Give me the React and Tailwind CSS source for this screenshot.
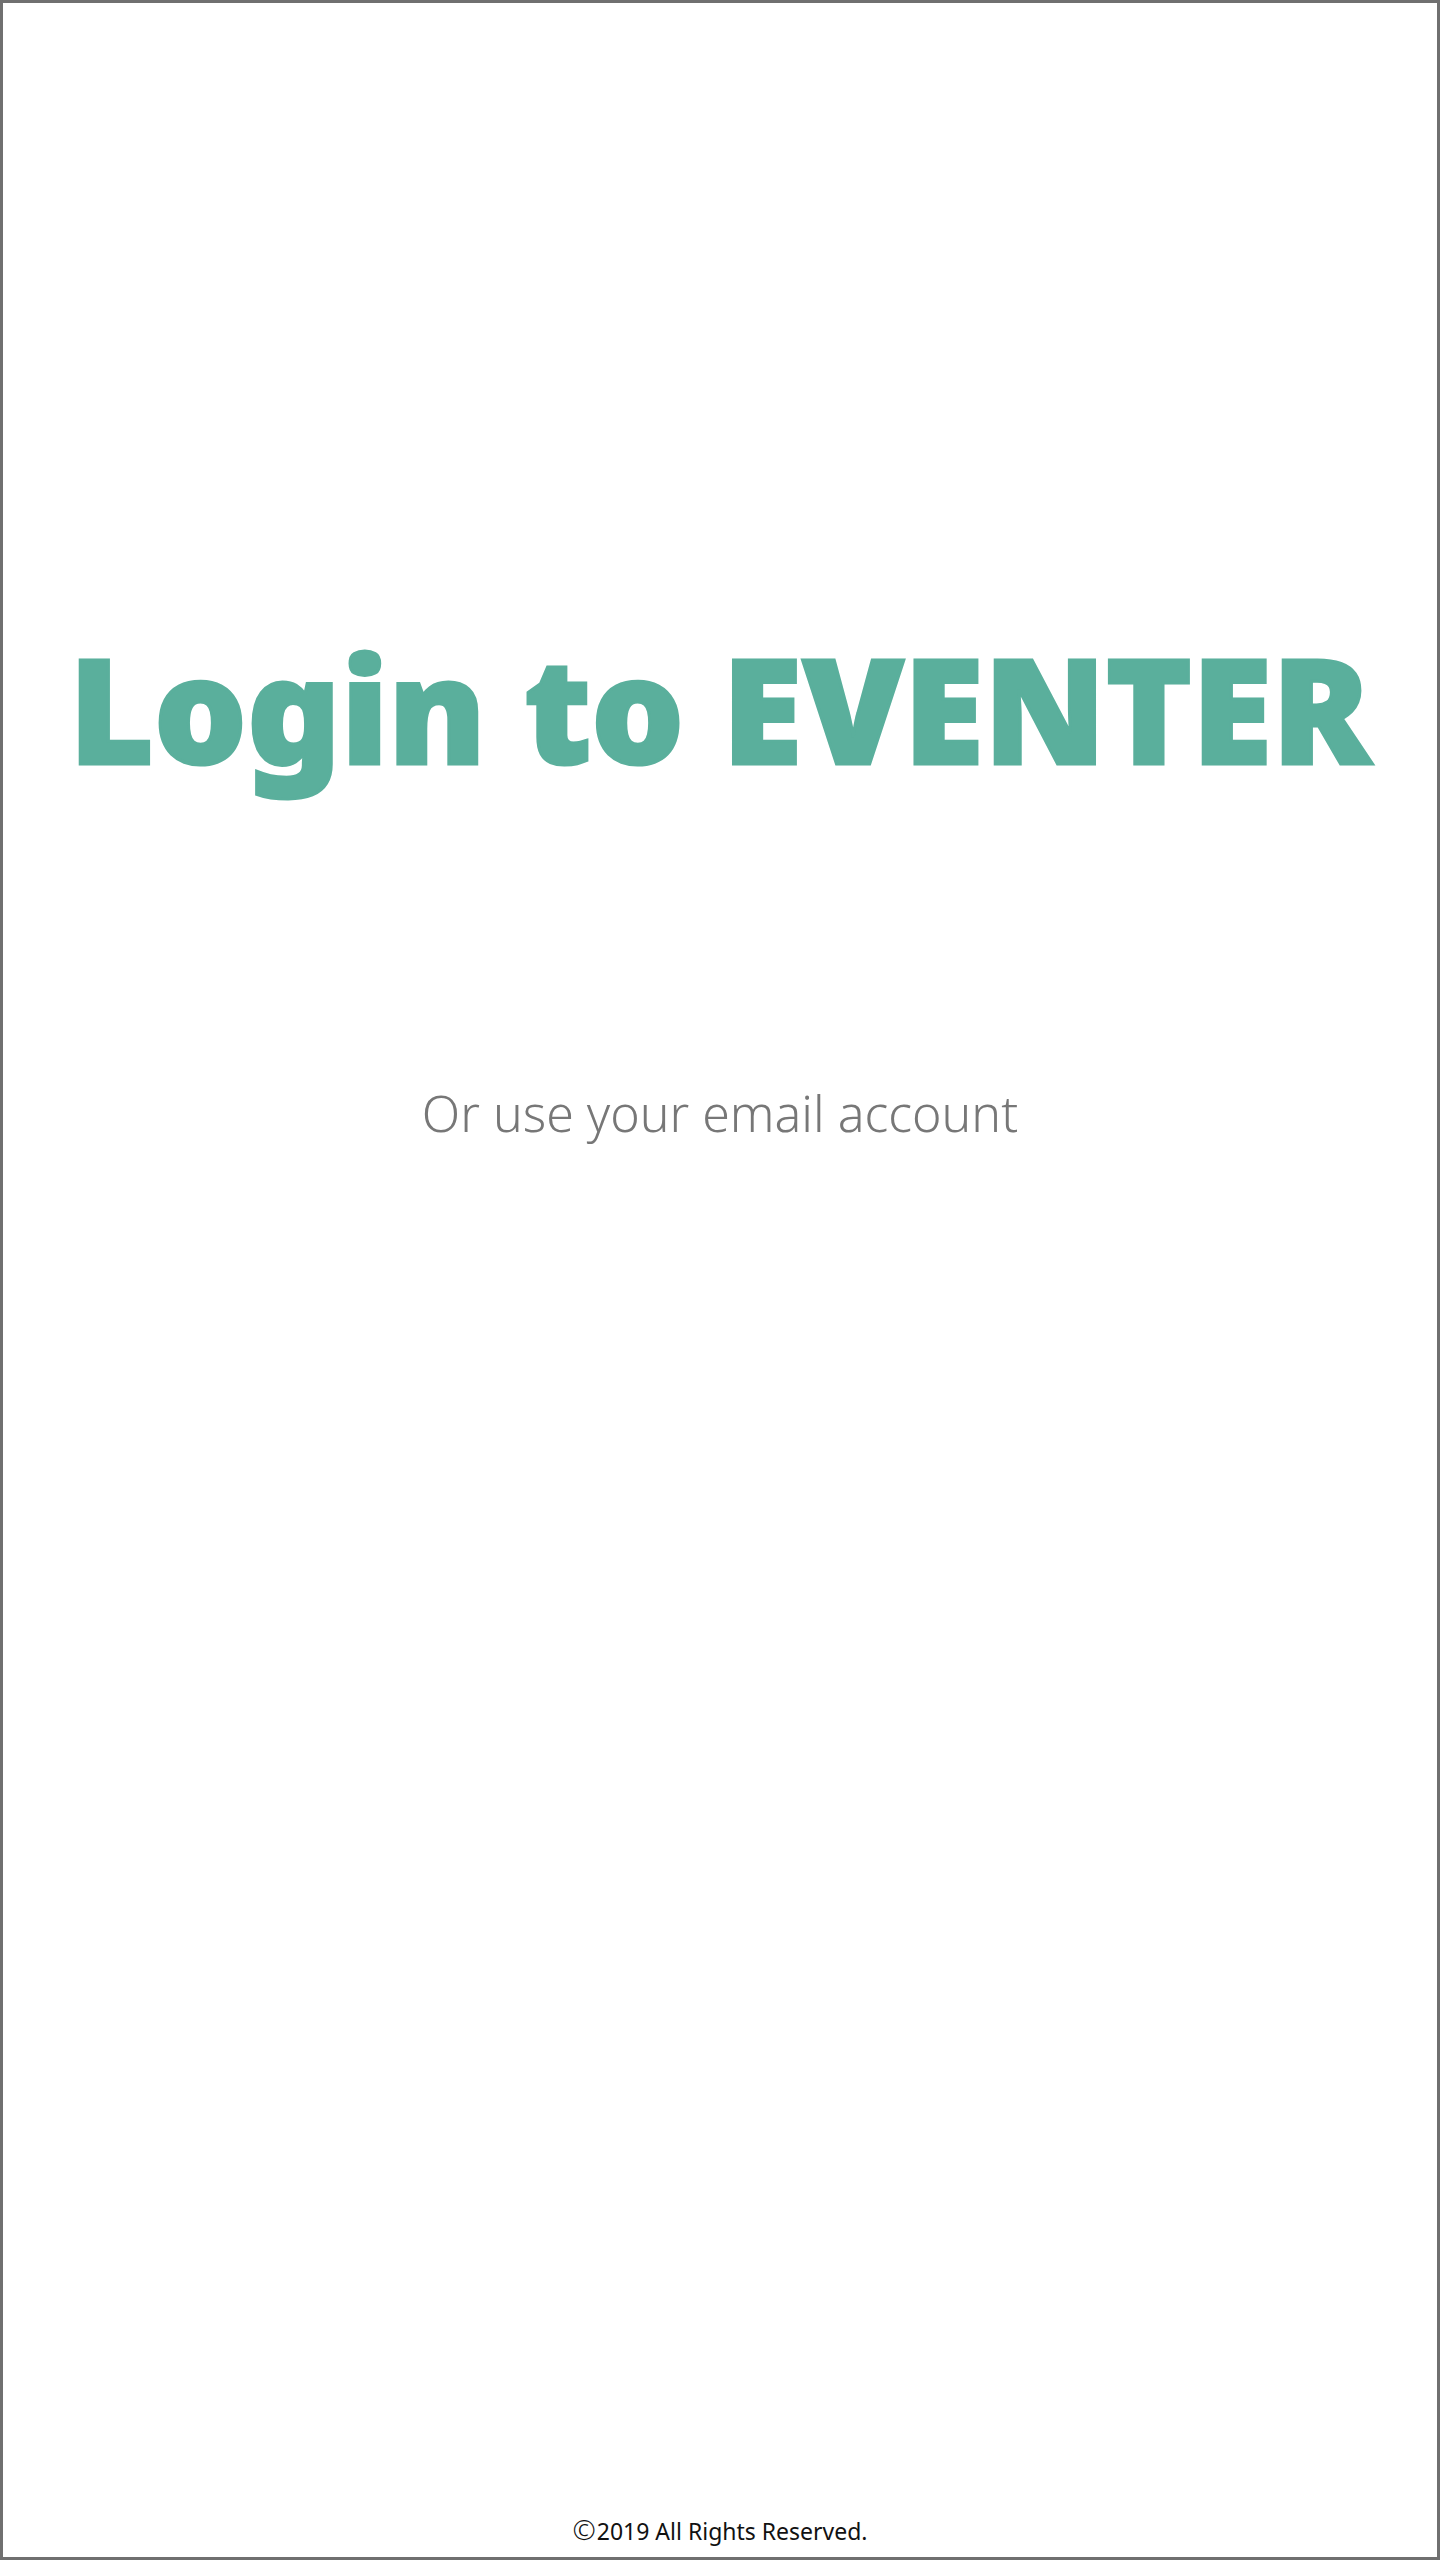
export default function App() {
  return (
    <div className="h-[2560px] w-[1440px] border-[3px] border-[#707070] bg-white flex flex-col items-center" style={{ fontFamily: '"Noto Sans", "Open Sans", sans-serif' }}>
      <h1 className="mt-[632px] text-[146px] leading-none font-black text-[#5aaf9c] text-center whitespace-nowrap [-webkit-text-stroke:3px_#5aaf9c]">Login to EVENTER</h1>
      <p className="mt-[307px] text-[50px] leading-none font-light text-[#777777] text-center">Or use your email account</p>
      <div className="mt-auto mb-[14px] flex items-baseline text-[23px] leading-none text-[#111111]">
        <span className="text-[28px] leading-none font-light mr-[1px]">©</span>
        <span>2019 All Rights Reserved.</span>
      </div>
    </div>
  );
}
